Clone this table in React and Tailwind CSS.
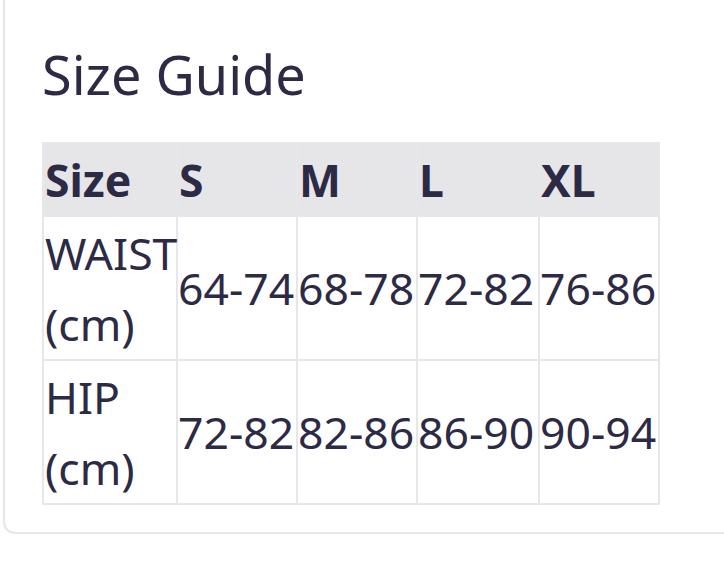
export default function App() {
  const rows = [
    { label: "WAIST (cm)", values: ["64-74", "68-78", "72-82", "76-86"] },
    { label: "HIP (cm)", values: ["72-82", "82-86", "86-90", "90-94"] },
  ];
  const sizes = ["S", "M", "L", "XL"];

  return (
    <div className="min-h-[565px] overflow-hidden bg-white font-['Noto_Sans',sans-serif] text-[#2c2a45]">
      <div className="ml-[3px] w-[760px] border-b-2 border-l-2 border-[#e6e7ea] rounded-bl-xl pl-[37px] pt-[42px] pb-[27px]">
        <h2 className="text-[54px] leading-[1.2] font-normal mb-[35px]">Size Guide</h2>
        <table className="table-fixed w-[616px] border-collapse text-[44.5px] leading-[71px]">
          <colgroup>
            <col className="w-[134px]" />
            <col className="w-[120px]" />
            <col className="w-[120px]" />
            <col className="w-[122px]" />
            <col className="w-[120px]" />
          </colgroup>
          <thead>
            <tr className="bg-[#e6e6e8]">
              <th className="border-2 border-[#e6e7ea] text-left font-bold px-px py-0">Size</th>
              {sizes.map((s) => (
                <th key={s} className="border-2 border-[#e6e7ea] text-left font-bold px-px py-0">
                  {s}
                </th>
              ))}
            </tr>
          </thead>
          <tbody>
            {rows.map((row) => (
              <tr key={row.label}>
                <td className="border-2 border-[#e6e7ea] px-px py-0 align-middle">{row.label}</td>
                {row.values.map((v, i) => (
                  <td key={i} className="border-2 border-[#e6e7ea] px-0 py-0 align-middle whitespace-nowrap">
                    {v}
                  </td>
                ))}
              </tr>
            ))}
          </tbody>
        </table>
      </div>
    </div>
  );
}
